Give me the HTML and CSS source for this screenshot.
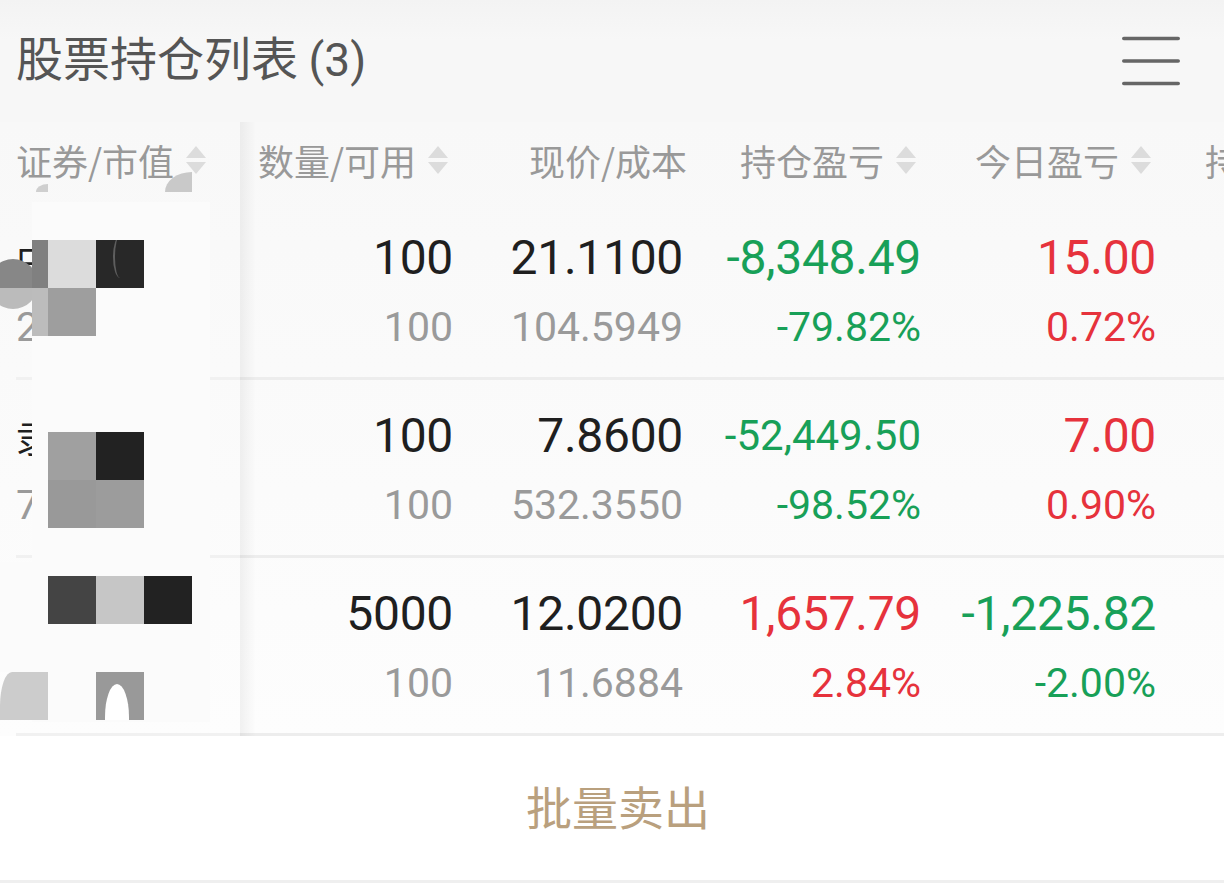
FILE: index.html
```html
<!DOCTYPE html>
<html lang="zh-CN">
<head>
<meta charset="utf-8">
<title>股票持仓列表</title>
<link rel="stylesheet" href="styles.css">
</head>
<body>
<div class="page">
  <header class="titlebar">
    <h1 class="title">股票持仓列表 <span class="count">(3)</span></h1>
    <button class="menu" aria-label="菜单">
      <svg width="58" height="50" viewBox="0 0 58 50"><path d="M1.8 2.5H56.2M1.8 25H56.2M1.8 47.5H56.2" stroke="#666" stroke-width="3.6" stroke-linecap="round" fill="none"/></svg>
    </button>
  </header>

  <section class="table">
    <div class="fixed">
      <div class="hcell first">证券/市值<svg class="sort" viewBox="0 0 20 28"><polygon points="10,0 20,12 0,12"/><polygon points="0,16 20,16 10,28"/></svg></div>
      <div class="row"><div class="line1 name">中国平安</div><div class="line2 num">2,110.00</div></div>
      <div class="row"><div class="line1 name">隶属科技</div><div class="line2 num">786.00</div></div>
      <div class="row"><div class="line1 name"></div><div class="line2 num"></div></div>

      <div class="mosaic" aria-hidden="true">
        <span class="veil"></span>
        <span class="veil v2"></span>
        <span class="arc a1"></span>
        <span class="arc a2"></span>
        <span class="disc"></span>
        <span class="blk b1"></span>
        <span class="blk b2"></span>
        <span class="blk b3"><i class="stroke"></i></span>
        <span class="blk b4"></span>
        <span class="blk b5"></span>
        <span class="blk b6"></span>
        <span class="blk b7"></span>
        <span class="blk b8"></span>
        <span class="blk b9"></span>
        <span class="blk b10"></span>
        <span class="blk b11"></span>
        <span class="blk b12"></span>
        <span class="blk b13"><i class="hole"></i></span>
        <span class="blk b14"></span>
      </div>
    </div>

    <div class="scroll">
      <div class="hrow">
        <div class="hcell c2">数量/可用<svg class="sort" viewBox="0 0 20 28"><polygon points="10,0 20,12 0,12"/><polygon points="0,16 20,16 10,28"/></svg></div>
        <div class="hcell c3 nosort">现价/成本</div>
        <div class="hcell c4">持仓盈亏<svg class="sort" viewBox="0 0 20 28"><polygon points="10,0 20,12 0,12"/><polygon points="0,16 20,16 10,28"/></svg></div>
        <div class="hcell c5">今日盈亏<svg class="sort" viewBox="0 0 20 28"><polygon points="10,0 20,12 0,12"/><polygon points="0,16 20,16 10,28"/></svg></div>
        <div class="hcell c6">持仓占比<svg class="sort" viewBox="0 0 20 28"><polygon points="10,0 20,12 0,12"/><polygon points="0,16 20,16 10,28"/></svg></div>
      </div>

      <div class="row">
        <div class="cell c2"><div class="line1">100</div><div class="line2">100</div></div>
        <div class="cell c3"><div class="line1">21.1100</div><div class="line2">104.5949</div></div>
        <div class="cell c4 down"><div class="line1">-8,348.49</div><div class="line2">-79.82%</div></div>
        <div class="cell c5 up"><div class="line1">15.00</div><div class="line2">0.72%</div></div>
      </div>

      <div class="row">
        <div class="cell c2"><div class="line1">100</div><div class="line2">100</div></div>
        <div class="cell c3"><div class="line1">7.8600</div><div class="line2">532.3550</div></div>
        <div class="cell c4 down"><div class="line1 shrink">-52,449.50</div><div class="line2">-98.52%</div></div>
        <div class="cell c5 up"><div class="line1">7.00</div><div class="line2">0.90%</div></div>
      </div>

      <div class="row">
        <div class="cell c2"><div class="line1">5000</div><div class="line2">100</div></div>
        <div class="cell c3"><div class="line1">12.0200</div><div class="line2">11.6884</div></div>
        <div class="cell c4 up"><div class="line1">1,657.79</div><div class="line2">2.84%</div></div>
        <div class="cell c5 down"><div class="line1">-1,225.82</div><div class="line2">-2.00%</div></div>
      </div>
    </div>
  </section>

  <footer class="actionbar">
    <span class="batch">批量卖出</span>
  </footer>
</div>
</body>
</html>
```

FILE: styles.css
```css
* {
  box-sizing: border-box;
  margin: 0;
  padding: 0;
}

html,
body {
  width: 1224px;
  height: 883px;
  overflow: hidden;
  background: #ffffff;
}

body {
  font-family: "Noto Sans CJK SC", "Noto Sans", sans-serif;
}

.page {
  width: 1224px;
  height: 883px;
  display: flex;
  flex-direction: column;
}

/* ---------- title bar ---------- */
.titlebar {
  flex: 0 0 122px;
  height: 122px;
  display: flex;
  align-items: center;
  justify-content: space-between;
  padding: 0 44px 8px 16px;
  background: linear-gradient(#f3f3f3, #f7f7f7 40px);
}

.title {
  font-size: 47px;
  font-weight: 400;
  line-height: 1;
  color: #555555;
  white-space: nowrap;
}

.count {
  font-family: Roboto, "Noto Sans", sans-serif;
  font-size: 46px;
}

.menu {
  border: 0;
  background: none;
  width: 58px;
  height: 50px;
  margin-top: 8px;
}

.menu svg {
  display: block;
}

/* ---------- table ---------- */
.table {
  flex: 0 0 614px;
  height: 614px;
  display: flex;
  background: linear-gradient(#f8f8f8, #fdfdfd);
}

.fixed {
  flex: 0 0 240px;
  width: 240px;
  position: relative;
  z-index: 1;
}

.fixed::after {
  content: "";
  position: absolute;
  top: 0;
  bottom: 0;
  right: -16px;
  width: 16px;
  background: linear-gradient(to right, rgba(0, 0, 0, 0.05), rgba(0, 0, 0, 0));
}

.scroll {
  flex: 1 1 auto;
  min-width: 0;
  overflow: hidden;
}

.hrow {
  display: flex;
  height: 80px;
}

.hcell {
  flex: 0 0 auto;
  height: 80px;
  display: flex;
  align-items: center;
  justify-content: flex-end;
  padding: 0 21px 4px 0;
  font-size: 36px;
  color: #999999;
  white-space: nowrap;
}

.hcell.first {
  justify-content: flex-start;
  padding-left: 16px;
}

.hcell.nosort {
  padding-right: 12px;
}

.sort {
  flex: 0 0 auto;
  width: 20px;
  height: 28px;
  margin-left: 12px;
  fill: #dcdcdc;
}

.row {
  display: flex;
  height: 178px;
  border-bottom: 3px solid #ededed;
}

.fixed .row {
  display: block;
  margin-left: 16px;
  padding-top: 28px;
  border-bottom-color: #f1f1f1;
}

.cell {
  flex: 0 0 auto;
  padding: 28px 16px 0 0;
  text-align: right;
  font-family: Roboto, "Noto Sans", sans-serif;
  white-space: nowrap;
}

.line1 {
  height: 56px;
  line-height: 56px;
  font-size: 48px;
  color: #1f1f1f;
}

.line2 {
  height: 56px;
  line-height: 56px;
  margin-top: 13px;
  font-size: 41px;
  color: #9a9a9a;
}

.cell .line1 {
  letter-spacing: -0.3px;
}

.line1.shrink {
  font-size: 42px;
  letter-spacing: 0;
}

.name {
  font-family: "Noto Sans CJK SC", sans-serif;
  font-size: 38px;
  white-space: nowrap;
  overflow: hidden;
}

.num {
  font-family: Roboto, sans-serif;
  white-space: nowrap;
  overflow: hidden;
}

.c2 { width: 229px; }
.c3 { width: 230px; }
.c4 { width: 238px; }
.c5 { width: 235px; }
.c6 { width: 230px; }

.up .line1,
.up .line2 {
  color: #e6323c;
}

.down .line1,
.down .line2 {
  color: #18a058;
}

/* ---------- redaction mosaic (overlay over the name column) ---------- */
.mosaic {
  position: absolute;
  left: 0;
  top: 0;
  width: 240px;
  height: 614px;
  pointer-events: none;
}

.mosaic span {
  position: absolute;
  display: block;
}

.veil {
  left: 32px;
  top: 80px;
  width: 178px;
  height: 520px;
  background: #fbfbfb;
}

.veil.v2 {
  left: 0;
  top: 440px;
  width: 32px;
  height: 110px;
}

.arc.a1 {
  left: 165px;
  top: 50px;
  width: 27px;
  height: 20px;
  background: #c9c9c9;
  border-top-left-radius: 27px 20px;
}

.arc.a2 {
  left: 36px;
  top: 62px;
  width: 12px;
  height: 8px;
  background: #cfcfcf;
  border-top-left-radius: 12px 8px;
}

.disc {
  left: -12px;
  top: 137px;
  width: 50px;
  height: 50px;
  border-radius: 50%;
  background: linear-gradient(#878787 0, #878787 29px, #bbbbbb 29px);
}

.blk {
  width: 48px;
  height: 48px;
  overflow: hidden;
}

.b1 { left: 32px; top: 118px; width: 16px; background: #808080; }
.b2 { left: 48px; top: 118px; background: #dcdcdc; }
.b3 { left: 96px; top: 118px; background: #282828; }
.b4 { left: 32px; top: 166px; width: 16px; background: #bcbcbc; }
.b5 { left: 48px; top: 166px; background: #9e9e9e; }
.b6 { left: 48px; top: 310px; background: #a0a0a0; }
.b7 { left: 96px; top: 310px; background: #222222; }
.b8 { left: 48px; top: 358px; background: #999999; }
.b9 { left: 96px; top: 358px; background: #9c9c9c; }
.b10 { left: 48px; top: 454px; background: #444444; }
.b11 { left: 96px; top: 454px; background: #c6c6c6; }
.b12 { left: 144px; top: 454px; background: #222222; }
.b13 { left: 96px; top: 550px; background: #999999; }
.b14 { left: 0; top: 550px; background: #cccccc; border-top-left-radius: 12px 34px; }

.stroke {
  position: absolute;
  left: 17px;
  top: -4px;
  width: 14px;
  height: 42px;
  border-left: 2px solid #5e5e5e;
  border-radius: 50% 0 0 50%;
}

.hole {
  position: absolute;
  left: 9px;
  top: 12px;
  width: 24px;
  height: 66px;
  border-radius: 50% 50% 0 0;
  background: #ffffff;
}

/* ---------- bottom action ---------- */
.actionbar {
  flex: 0 0 147px;
  height: 147px;
  display: flex;
  align-items: center;
  justify-content: center;
  padding: 0 0 6px 12px;
  background: #ffffff;
  border-bottom: 3px solid #efefef;
}

.batch {
  font-size: 46px;
  color: #b9a07e;
  line-height: 1;
}
```
